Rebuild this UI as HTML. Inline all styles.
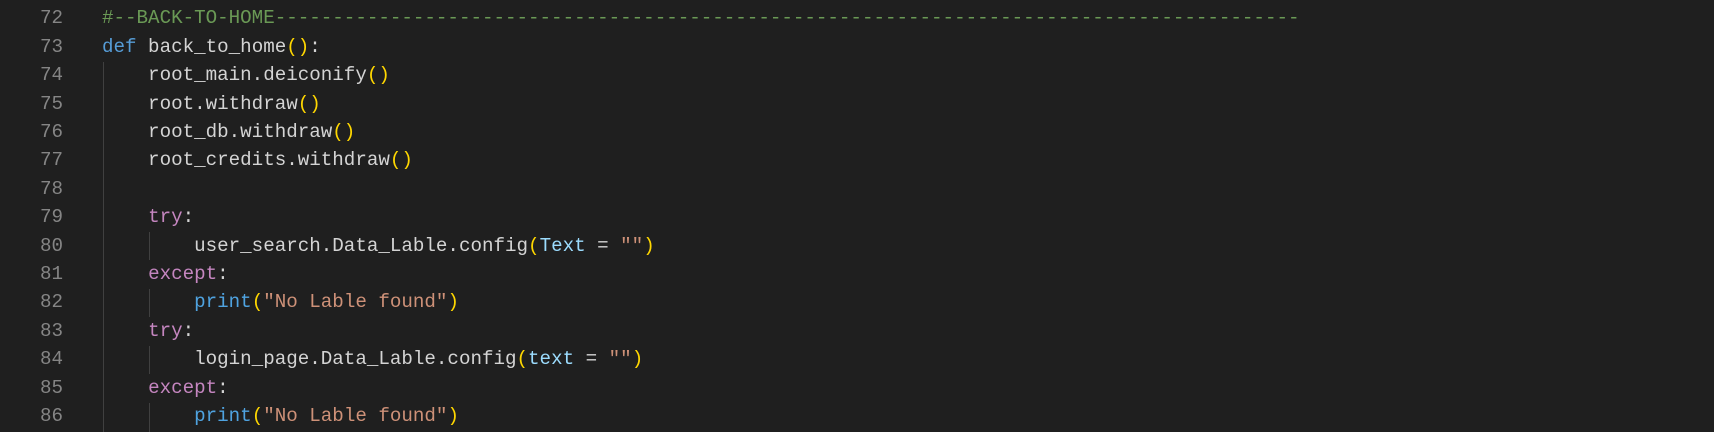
<!DOCTYPE html><html><head><style>
body{margin:0;background:#1f1f1f;width:1714px;height:432px;overflow:hidden;font-family:"Liberation Mono",monospace;font-size:19.2px;position:relative}
.l{position:absolute;left:0;width:1714px;overflow:hidden;height:28.4px;line-height:28.4px;white-space:pre;color:#d4d4d4}
.n{position:absolute;left:12px;width:51px;color:#858585;text-align:right}
.c{position:absolute;left:102px}
.g{position:absolute;width:1px;background:#404040}
.cm{color:#6a9955}.k{color:#569cd6}.p{color:#ffd700}.kw{color:#c586c0}.s{color:#ce9178}.v{color:#9cdcfe}.b{color:#4fa3e0}
</style></head><body>
<div class="g" style="left:103px;top:62px;height:370px"></div>
<div class="g" style="left:149px;top:232px;height:28px"></div>
<div class="g" style="left:149px;top:289px;height:28px"></div>
<div class="g" style="left:149px;top:346px;height:28px"></div>
<div class="g" style="left:149px;top:403px;height:29px"></div>
<div class="l" style="top:4px"><span class="n">72</span><span class="c"><span class="cm">#--BACK-TO-HOME-----------------------------------------------------------------------------------------</span></span></div>
<div class="l" style="top:33px"><span class="n">73</span><span class="c"><span class="k">def</span> back_to_home<span class="p">()</span>:</span></div>
<div class="l" style="top:61px"><span class="n">74</span><span class="c">    root_main.deiconify<span class="p">()</span></span></div>
<div class="l" style="top:90px"><span class="n">75</span><span class="c">    root.withdraw<span class="p">()</span></span></div>
<div class="l" style="top:118px"><span class="n">76</span><span class="c">    root_db.withdraw<span class="p">()</span></span></div>
<div class="l" style="top:146px"><span class="n">77</span><span class="c">    root_credits.withdraw<span class="p">()</span></span></div>
<div class="l" style="top:175px"><span class="n">78</span><span class="c"></span></div>
<div class="l" style="top:203px"><span class="n">79</span><span class="c">    <span class="kw">try</span>:</span></div>
<div class="l" style="top:232px"><span class="n">80</span><span class="c">        user_search.Data_Lable.config<span class="p">(</span><span class="v">Text</span> = <span class="s">""</span><span class="p">)</span></span></div>
<div class="l" style="top:260px"><span class="n">81</span><span class="c">    <span class="kw">except</span>:</span></div>
<div class="l" style="top:288px"><span class="n">82</span><span class="c">        <span class="b">print</span><span class="p">(</span><span class="s">"No Lable found"</span><span class="p">)</span></span></div>
<div class="l" style="top:317px"><span class="n">83</span><span class="c">    <span class="kw">try</span>:</span></div>
<div class="l" style="top:345px"><span class="n">84</span><span class="c">        login_page.Data_Lable.config<span class="p">(</span><span class="v">text</span> = <span class="s">""</span><span class="p">)</span></span></div>
<div class="l" style="top:374px"><span class="n">85</span><span class="c">    <span class="kw">except</span>:</span></div>
<div class="l" style="top:402px"><span class="n">86</span><span class="c">        <span class="b">print</span><span class="p">(</span><span class="s">"No Lable found"</span><span class="p">)</span></span></div>
</body></html>
